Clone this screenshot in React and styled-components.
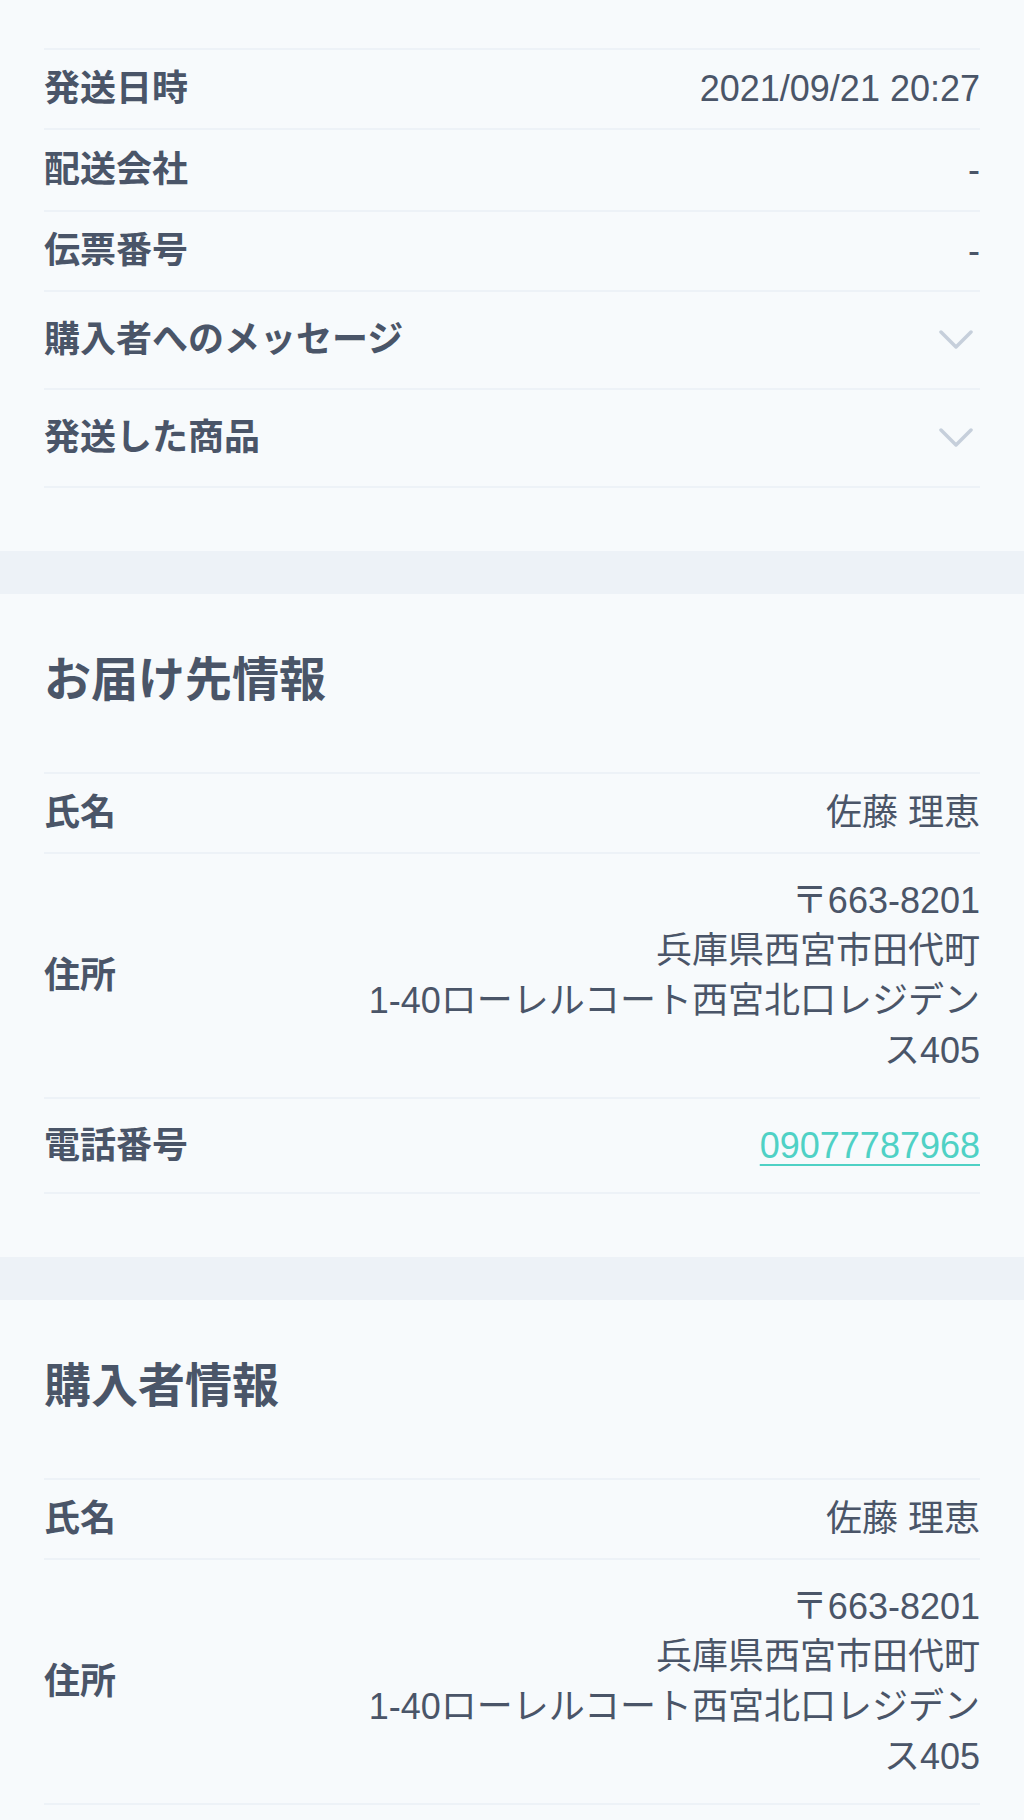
import React from "react";
import styled, { createGlobalStyle } from "styled-components";

const GlobalStyle = createGlobalStyle`
    body {
        margin: 0;
        background-color: #f7fafc;
        color: #4a5568;
        font-family: "Liberation Sans", "Noto Sans CJK JP", sans-serif;
    }
`;

const Page = styled.div`
    display: flex;
    flex-direction: column;
    padding-top: 48px;
`;

const Section = styled.section`
    padding: ${(p) => (p.top ? "0" : "56px")} 44px 63px;
`;

const Band = styled.div`
    height: 43px;
    background-color: #edf2f7;
`;

const Heading = styled.h2`
    margin: 0 0 62px;
    font-size: 47px;
    line-height: 60px;
    font-weight: 700;
    color: #4a5568;
`;

const List = styled.ul`
    list-style-type: none;
    margin: 0;
    padding: 0;
    border-top: 2px solid #edf2f7;
`;

const Row = styled.li`
    display: flex;
    flex-direction: row;
    align-items: center;
    justify-content: space-between;
    padding: ${(p) => p.pad || 19}px 0;
    border-bottom: 2px solid #edf2f7;
    font-size: 36px;
    line-height: 40px;
`;

const Label = styled.span`
    font-weight: 700;
    white-space: nowrap;
`;

const Value = styled.span`
    text-align: right;
    line-height: ${(p) => (p.multi ? "50px" : "40px")};
    & span {
        display: block;
    }
`;

const PhoneLink = styled.a`
    color: #4fd1c5;
    text-decoration: underline;
    text-decoration-thickness: 2px;
    text-underline-offset: 6px;
`;

const Chevron = styled.svg`
    width: 34px;
    height: 20px;
    margin-right: 7px;
    stroke: #c6cfdb;
    stroke-width: 3.5;
    fill: none;
    stroke-linecap: round;
    stroke-linejoin: round;
`;

function ChevronDown() {
    return (
        <Chevron viewBox="0 0 34 20">
            <path d="M2 2 L17 17 L32 2" />
        </Chevron>
    );
}

function Address() {
    return (
        <Value multi>
            <span>〒663-8201</span>
            <span>兵庫県西宮市田代町</span>
            <span>1-40ローレルコート西宮北口レジデン</span>
            <span>ス405</span>
        </Value>
    );
}

export default function App() {
    return (
        <Page>
            <GlobalStyle />
            <Section top>
                <List>
                    <Row>
                        <Label>発送日時</Label>
                        <Value>2021/09/21 20:27</Value>
                    </Row>
                    <Row pad={20}>
                        <Label>配送会社</Label>
                        <Value>-</Value>
                    </Row>
                    <Row>
                        <Label>伝票番号</Label>
                        <Value>-</Value>
                    </Row>
                    <Row pad={28}>
                        <Label>購入者へのメッセージ</Label>
                        <ChevronDown />
                    </Row>
                    <Row pad={28}>
                        <Label>発送した商品</Label>
                        <ChevronDown />
                    </Row>
                </List>
            </Section>
            <Band />
            <Section>
                <Heading>お届け先情報</Heading>
                <List>
                    <Row>
                        <Label>氏名</Label>
                        <Value>佐藤 理恵</Value>
                    </Row>
                    <Row pad={21.5}>
                        <Label>住所</Label>
                        <Address />
                    </Row>
                    <Row pad={26.5}>
                        <Label>電話番号</Label>
                        <Value>
                            <PhoneLink href="#">09077787968</PhoneLink>
                        </Value>
                    </Row>
                </List>
            </Section>
            <Band />
            <Section>
                <Heading>購入者情報</Heading>
                <List>
                    <Row>
                        <Label>氏名</Label>
                        <Value>佐藤 理恵</Value>
                    </Row>
                    <Row pad={21.5}>
                        <Label>住所</Label>
                        <Address />
                    </Row>
                </List>
            </Section>
        </Page>
    );
}
